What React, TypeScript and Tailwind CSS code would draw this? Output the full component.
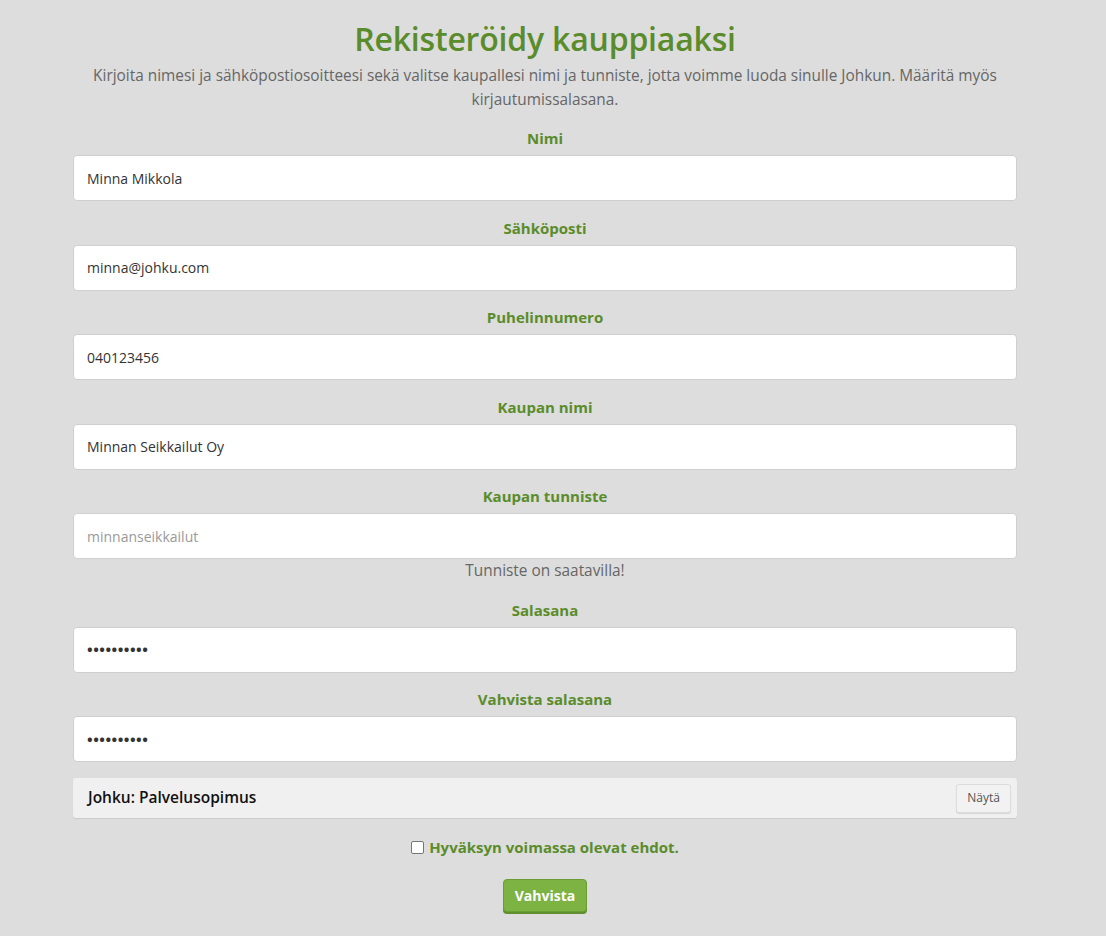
import React from "react";

const Field = ({ label, value, type = "text", placeholder = false }: { label: string; value: string; type?: string; placeholder?: boolean }) => (
  <div className="flex flex-col">
    <label className="text-center text-[15px] font-bold leading-[20px] text-[#5a8c2b] mb-[7px]">{label}</label>
    <div className="h-[46px] bg-white rounded-[4px] border border-[#cfcfcf] flex items-center px-[13px] text-[14px]">
      {type === "password" ? (
        <span className="text-[#333] tracking-[0.5px] text-[15px] font-bold">••••••••••</span>
      ) : (
        <span className={placeholder ? "text-[#999]" : "text-[#333]"}>{value}</span>
      )}
    </div>
  </div>
);

export default function App() {
  return (
    <div className="min-h-[936px] bg-[#dddddd] font-['Open_Sans',sans-serif]">
      <div className="w-[1090px]">
        <div className="w-[944px] mx-auto pt-[17px] flex flex-col">
          <h1 className="text-center text-[32px] leading-[44px] font-semibold tracking-[-0.2px] text-[#5a8c2b]">Rekisteröidy kauppiaaksi</h1>
          <p className="text-center text-[15.4px] leading-[24px] text-[#666] mt-[3px] px-[20px]">
            Kirjoita nimesi ja sähköpostiosoitteesi sekä valitse kaupallesi nimi ja tunniste, jotta voimme luoda sinulle Johkun. Määritä myös kirjautumissalasana.
          </p>
          <div className="flex flex-col gap-[16.5px] mt-[16px]">
            <Field label="Nimi" value="Minna Mikkola" />
            <Field label="Sähköposti" value="minna@johku.com" />
            <Field label="Puhelinnumero" value="040123456" />
            <Field label="Kaupan nimi" value="Minnan Seikkailut Oy" />
            <div className="flex flex-col">
              <Field label="Kaupan tunniste" value="minnanseikkailut" placeholder />
              <div className="text-center text-[15.4px] leading-[24px] text-[#666]">Tunniste on saatavilla!</div>
            </div>
            <Field label="Salasana" value="" type="password" />
            <Field label="Vahvista salasana" value="" type="password" />
          </div>
          <div className="mt-[16px] h-[40px] bg-[#f0f0f0] rounded-[3px] shadow-[0_1px_1px_rgba(0,0,0,0.08)] flex items-center justify-between pl-[15px] pr-[6px]">
            <span className="text-[15.5px] font-semibold text-[#111]">Johku: Palvelusopimus</span>
            <button className="h-[29px] px-[10px] text-[12px] text-[#555] bg-[#f2f2f2] border border-[#dcdcdc] rounded-[3px] shadow-[0_1px_1px_rgba(0,0,0,0.1)]">Näytä</button>
          </div>
          <div className="mt-[18px] flex items-center justify-center gap-[5px]">
            <span className="w-[13px] h-[13px] border border-[#767676] rounded-[2px] bg-white"></span>
            <span className="text-[15px] font-bold text-[#5a8c2b]">Hyväksyn voimassa olevat ehdot.</span>
          </div>
          <div className="mt-[20px] flex justify-center">
            <button className="h-[33px] px-[11px] bg-[#7cb342] text-white font-bold text-[14px] rounded-[4px] border border-[#6a9e35] shadow-[0_2px_0_#5f8f2f]">Vahvista</button>
          </div>
        </div>
      </div>
    </div>
  );
}
